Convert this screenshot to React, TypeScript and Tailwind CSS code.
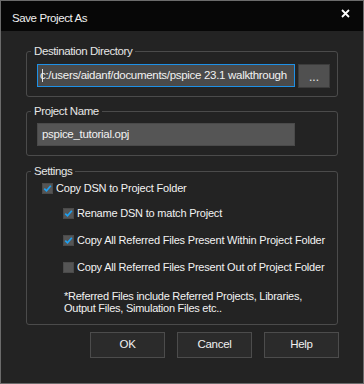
import React, { useState } from 'react';

const font = { fontFamily: '"Liberation Sans", Arial, sans-serif' };

interface CheckProps {
  checked: boolean;
  label: string;
  indent?: boolean;
  onToggle: () => void;
}

const Check: React.FC<CheckProps> = ({ checked, label, indent, onToggle }) => (
  <div
    className={`flex items-center h-[14px] cursor-default ${indent ? 'ml-[21px]' : ''}`}
    onClick={onToggle}
  >
    <div className="w-[11px] h-[11px] bg-[#555555] border border-[#4a4a4a] flex items-center justify-center shrink-0">
      {checked && (
        <svg width="9" height="9" viewBox="0 0 9 9">
          <path d="M1.3 4.6 L3.5 6.8 L7.8 1.8" fill="none" stroke="#1ea1f2" strokeWidth="1.7" />
        </svg>
      )}
    </div>
    <span className="ml-[3px] text-[11px] tracking-[-0.2px] text-[#f2f2f2] leading-none whitespace-nowrap">{label}</span>
  </div>
);

const Group: React.FC<{ title: string; className?: string; legendClass: string; children: React.ReactNode }> = ({
  title,
  className,
  legendClass,
  children,
}) => (
  <fieldset className={`border border-[#4b4b4b] rounded-[3px] ${className || ''}`}>
    <legend className={`px-[3px] text-[11.5px] tracking-[-0.4px] leading-[14px] text-[#e6e6e6] ${legendClass}`}>{title}</legend>
    {children}
  </fieldset>
);

export default function App() {
  const [copyDsn, setCopyDsn] = useState(true);
  const [rename, setRename] = useState(true);
  const [within, setWithin] = useState(true);
  const [outside, setOutside] = useState(false);

  return (
    <div className="w-[364px] h-[384px] bg-[#232323] border border-[#6b6b6b] flex flex-col" style={font}>
      <div className="h-[30px] bg-[#070707] flex items-center justify-between shrink-0 pl-[11px] pr-[13px]">
        <span className="text-[11.5px] tracking-[-0.4px] text-[#f0f0f0] mt-[6px]">Save Project As</span>
        <svg width="9" height="9" viewBox="0 0 9 9" className="-mt-[6px]">
          <path d="M1 1 L8 8 M8 1 L1 8" stroke="#ffffff" strokeWidth="1.8" />
        </svg>
      </div>

      <div className="flex flex-col px-[25px] pt-[13px]">
        <Group title="Destination Directory" legendClass="-ml-[6px]" className="pl-[10px] pr-[6px] pt-[6px] pb-[8px]">
          <div className="flex gap-[3px]">
            <div className="w-[258px] h-[23px] bg-[#4a4a4a] border border-[#1e90e6] flex items-center overflow-hidden pl-[4px]">
              <span className="w-px h-[13px] bg-[#e0e0e0] shrink-0" />
              <span className="-ml-[3px] text-[11.5px] tracking-[-0.3px] text-[#f2f2f2] whitespace-nowrap">c:/users/aidanf/documents/pspice 23.1 walkthrough</span>
            </div>
            <div className="w-[32px] h-[24px] bg-[#505050] border border-[#3c3c3c] flex items-end justify-center pb-[4px] text-[12px] text-[#e8e8e8] leading-none">
              ...
            </div>
          </div>
        </Group>

        <Group title="Project Name" legendClass="-ml-[6px]" className="mt-[7px] pl-[10px] pr-[6px] pt-[5px] pb-[9px]">
          <div className="w-[258px] h-[23px] bg-[#555555] border border-[#4a4a4a] flex items-center px-[4px] text-[11.5px] tracking-[-0.3px] text-[#f2f2f2]">
            pspice_tutorial.opj
          </div>
        </Group>

        <Group title="Settings" legendClass="-ml-[11px]" className="mt-[8px] pl-[15px] pt-[3px] pb-[10px]">
          <div className="flex flex-col">
            <Check checked={copyDsn} label="Copy DSN to Project Folder" onToggle={() => setCopyDsn(!copyDsn)} />
            <div className="mt-[11px] flex flex-col gap-[13px]">
              <Check indent checked={rename} label="Rename DSN to match Project" onToggle={() => setRename(!rename)} />
              <Check indent checked={within} label="Copy All Referred Files Present Within Project Folder" onToggle={() => setWithin(!within)} />
              <Check indent checked={outside} label="Copy All Referred Files Present Out of Project Folder" onToggle={() => setOutside(!outside)} />
            </div>
            <p className="mt-[16px] ml-[22px] text-[11px] tracking-[-0.25px] leading-[12px] text-[#f2f2f2]">
              *Referred Files include Referred Projects, Libraries,
              <br />
              Output Files, Simulation Files etc..
            </p>
          </div>
        </Group>

        <div className="flex justify-end gap-[12px] mt-[7px] -mr-[1px]">
          {['OK', 'Cancel', 'Help'].map(b => (
            <button
              key={b}
              className="w-[75px] h-[26px] bg-[#2b2b2b] border border-[#4c4c4c] text-[11.5px] tracking-[-0.3px] text-[#f0f0f0]"
            >
              {b}
            </button>
          ))}
        </div>
      </div>
    </div>
  );
}
